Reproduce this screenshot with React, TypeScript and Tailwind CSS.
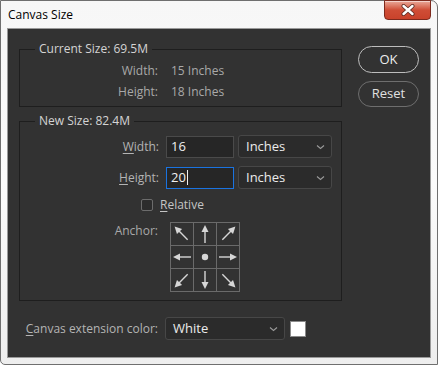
import React from "react";

const font = { fontFamily: '"Open Sans", "Noto Sans", sans-serif' };

function Chevron() {
  return (
    <svg width="9" height="6" viewBox="0 0 9 6" className="ml-auto mr-[6px]">
      <path d="M1 1.5 L4.5 4.5 L8 1.5" fill="none" stroke="#9a9a9a" strokeWidth="1.1" />
    </svg>
  );
}

function Select({ value, w }: { value: string; w: string }) {
  return (
    <div className={`${w} h-[23px] flex items-center rounded-[3px] border border-[#474747] bg-[#2b2b2b] pl-[7px] text-[13px] text-[#ececec]`}>
      <span>{value}</span>
      <Chevron />
    </div>
  );
}

function Arrow({ dir }: { dir: string }) {
  const c = "#d6d6d6";
  const rot: Record<string, number> = { n: 0, ne: 45, e: 90, se: 135, s: 180, sw: 225, w: 270, nw: 315 };
  if (dir === "c")
    return (
      <svg width="22" height="22" viewBox="0 0 22 22">
        <circle cx="11" cy="11" r="3.2" fill={c} />
      </svg>
    );
  const diag = dir.length === 2;
  return (
    <svg width="22" height="22" viewBox="0 0 22 22">
      <g transform={`rotate(${rot[dir]} 11 11)`}>
        {diag ? (
          <>
            <line x1="11" y1="4" x2="11" y2="19" stroke={c} strokeWidth="1.4" transform="translate(0 0)" />
            <polygon points="11,0.5 7.4,7.5 14.6,7.5" fill={c} />
          </>
        ) : (
          <>
            <line x1="11" y1="7" x2="11" y2="20" stroke={c} strokeWidth="1.4" />
            <polygon points="11,2 7.5,9 14.5,9" fill={c} />
          </>
        )}
      </g>
    </svg>
  );
}

export default function App() {
  const dirs = ["nw", "n", "ne", "w", "c", "e", "sw", "s", "se"];
  return (
    <div className="w-[438px] h-[365px] bg-white" style={font}>
      <div className="w-full h-full border border-[#6f6f6f] rounded-tr-[7px] rounded-bl-[5px] bg-gradient-to-b from-[#f7f7f7] via-[#fbfbfb] to-[#eeeeee] flex flex-col relative">
        <div className="h-[28px] flex items-center pl-[7px] text-[12px] text-black">Canvas Size</div>
        <div className="absolute right-[6px] top-[-1px] w-[47px] h-[20px] rounded-b-[4px] border border-[#7d2a1e] bg-gradient-to-b from-[#e9a899] via-[#cf4d36] to-[#c9422b] flex items-center justify-center shadow-[inset_0_1px_0_rgba(255,255,255,0.5)]">
          <svg width="14" height="12" viewBox="0 0 14 12">
            <path d="M2.5 2 L11.5 10 M11.5 2 L2.5 10" stroke="#5a2a22" strokeWidth="4" strokeLinecap="round" />
            <path d="M2.5 2 L11.5 10 M11.5 2 L2.5 10" stroke="#ffffff" strokeWidth="2.4" strokeLinecap="round" />
          </svg>
        </div>
        <div className="mx-[7px] mb-[7px] flex-1 bg-[#323232] flex outline outline-1 outline-[#9a9a9a]">
          <div className="ml-[11px] mt-[20px] w-[323px] flex flex-col">
            <div className="relative h-[58px] border border-[#1e1e1e] pt-[10px]">
              <span className="absolute top-[-10px] left-[15px] px-[4px] bg-[#323232] text-[12px] text-[#d4d4d4] leading-[18px]">Current Size: 69.5M</span>
              <div className="flex items-center h-[21px] text-[12px] text-[#a9a9a9]">
                <span className="w-[138px] text-right">Width:</span>
                <span className="ml-[13px]">15 Inches</span>
              </div>
              <div className="flex items-center h-[21px] text-[12px] text-[#a9a9a9]">
                <span className="w-[138px] text-right">Height:</span>
                <span className="ml-[13px]">18 Inches</span>
              </div>
            </div>
            <div className="relative mt-[14px] h-[180px] border border-[#1e1e1e] pt-[13px]">
              <span className="absolute top-[-10px] left-[15px] px-[4px] bg-[#323232] text-[12px] text-[#d4d4d4] leading-[18px]">New Size: 82.4M</span>
              <div className="flex items-center h-[23px] text-[12px]">
                <span className="w-[139px] text-right text-[#b4b4b4]"><span className="underline underline-offset-2">W</span>idth:</span>
                <div className="ml-[7px] w-[68px] h-[22px] border border-[#4a4a4a] bg-[#262626] pl-[4px] flex items-center text-[13px] text-[#f0f0f0]">16</div>
                <div className="ml-[4px]"><Select value="Inches" w="w-[94px]" /></div>
              </div>
              <div className="mt-[8px] flex items-center h-[23px] text-[12px]">
                <span className="w-[139px] text-right text-[#b4b4b4]"><span className="underline underline-offset-2">H</span>eight:</span>
                <div className="ml-[7px] w-[68px] h-[22px] border border-[#1a73e0] bg-[#262626] pl-[4px] flex items-center text-[13px] text-[#f0f0f0]">
                  20<span className="ml-[1px] w-px h-[15px] bg-[#f0f0f0]" />
                </div>
                <div className="ml-[4px]"><Select value="Inches" w="w-[94px]" /></div>
              </div>
              <div className="mt-[10px] flex items-center h-[12px] pl-[121px]">
                <div className="w-[12px] h-[12px] rounded-[2px] border border-[#6c6c6c] bg-[#2c2c2c]" />
                <span className="ml-[7px] text-[12px] text-[#c4c4c4]"><span className="underline underline-offset-2">R</span>elative</span>
              </div>
              <div className="mt-[11px] flex">
                <span className="w-[138px] text-right text-[12px] text-[#a9a9a9] leading-[17px]">Anchor:</span>
                <div className="ml-[12px] grid grid-cols-3 gap-px bg-[#6a6a6a] p-px">
                  {dirs.map((d) => (
                    <div key={d} className="w-[22px] h-[22px] bg-[#323232] flex items-center justify-center">
                      <Arrow dir={d} />
                    </div>
                  ))}
                </div>
              </div>
            </div>
            <div className="mt-[16px] flex items-center">
              <span className="w-[139px] text-right text-[12px] text-[#b4b4b4]"><span className="underline underline-offset-2">C</span>anvas extension color:</span>
              <div className="ml-[7px]"><Select value="White" w="w-[120px]" /></div>
              <div className="ml-[5px] w-[16px] h-[16px] bg-white border border-[#8a8a8a]" />
            </div>
          </div>
          <div className="ml-[16px] mt-[17px] flex flex-col gap-[8px]">
            <div className="w-[61px] h-[27px] rounded-full border-[1.5px] border-[#bdbdbd] flex items-center justify-center text-[13px] text-[#ededed]">OK</div>
            <div className="w-[61px] h-[26px] rounded-full border border-[#6e6e6e] flex items-center justify-center text-[13px] text-[#e0e0e0]">Reset</div>
          </div>
        </div>
      </div>
    </div>
  );
}
